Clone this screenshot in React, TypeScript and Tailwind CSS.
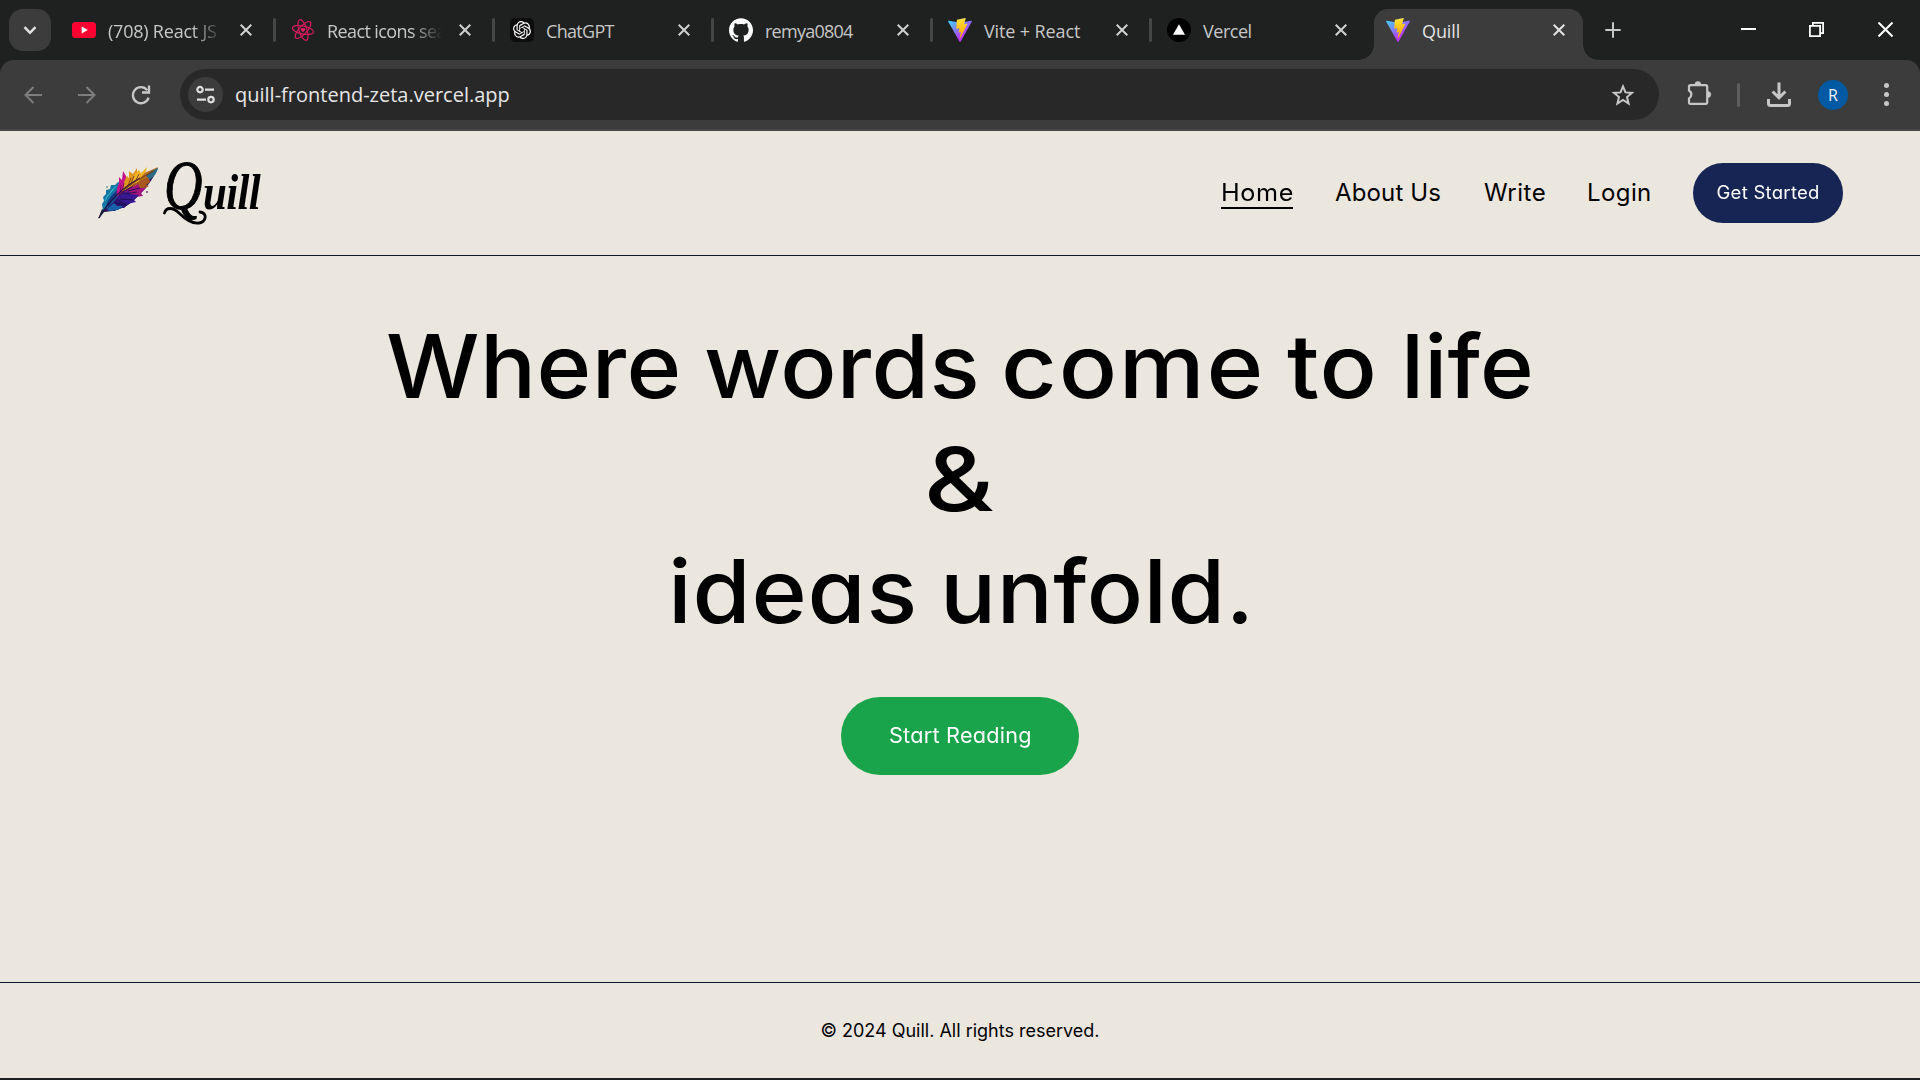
import React from "react";
import type { ReactNode } from "react";
import { SiGithub, SiOpenai } from "react-icons/si";

function ViteIcon({ id }: { id: string }) {
  return (
    <svg viewBox="0 0 256 257" className="h-6 w-6">
      <defs>
        <linearGradient id={`${id}-a`} x1="-.828%" x2="57.636%" y1="7.652%" y2="78.411%">
          <stop offset="0%" stopColor="#41D1FF" />
          <stop offset="100%" stopColor="#BD34FE" />
        </linearGradient>
        <linearGradient id={`${id}-b`} x1="43.376%" x2="50.316%" y1="2.242%" y2="89.03%">
          <stop offset="0%" stopColor="#FFEA83" />
          <stop offset="8.333%" stopColor="#FFDD35" />
          <stop offset="100%" stopColor="#FFA800" />
        </linearGradient>
      </defs>
      <path
        fill={`url(#${id}-a)`}
        d="M255.153 37.938L134.897 252.976c-2.483 4.44-8.862 4.466-11.382.048L.875 37.958c-2.746-4.814 1.371-10.646 6.827-9.67l120.385 21.517a6.537 6.537 0 0 0 2.322-.004l117.867-21.483c5.438-.991 9.574 4.796 6.877 9.62Z"
      />
      <path
        fill={`url(#${id}-b)`}
        d="M185.432.063L96.44 17.501a3.268 3.268 0 0 0-2.634 3.014l-5.474 92.456a3.268 3.268 0 0 0 3.997 3.378l24.777-5.718c2.318-.535 4.413 1.507 3.936 3.838l-7.361 36.047c-.495 2.426 1.782 4.5 4.151 3.78l15.304-4.649c2.372-.72 4.652 1.36 4.15 3.788l-11.698 56.621c-.732 3.542 3.979 5.473 5.943 2.437l1.313-2.028 72.516-144.72c1.215-2.423-.88-5.186-3.54-4.672l-25.505 4.922c-2.396.462-4.435-1.77-3.759-4.114l16.646-57.705c.677-2.35-1.37-4.583-3.769-4.113Z"
      />
    </svg>
  );
}

function YouTubeIcon() {
  return (
    <svg viewBox="0 0 24 24" className="h-6 w-6">
      <rect x="0" y="4" width="24" height="16" rx="3.6" fill="#ff0033" />
      <path d="M9.7 8.6 15.8 12l-6.1 3.4z" fill="#fff" />
    </svg>
  );
}

function AtomIcon() {
  return (
    <svg viewBox="0 0 24 24" className="h-6 w-6" fill="none" stroke="#d81b60" strokeWidth="1.15">
      <ellipse cx="12" cy="12" rx="10.8" ry="4" transform="rotate(12 12 12)" />
      <ellipse cx="12" cy="12" rx="10.8" ry="4" transform="rotate(72 12 12)" />
      <ellipse cx="12" cy="12" rx="10.8" ry="4" transform="rotate(132 12 12)" />
      <path
        d="M12 14.3 9.8 12.1a1.3 1.3 0 0 1 2.2-1.5 1.3 1.3 0 0 1 2.2 1.5z"
        fill="#e91e63"
        stroke="none"
      />
    </svg>
  );
}

function OpenAiIcon() {
  return (
    <span className="flex h-6 w-6 items-center justify-center rounded-[5px] bg-[#0d0d0d] text-white">
      <SiOpenai size={18} />
    </span>
  );
}

function VercelIcon() {
  return (
    <svg viewBox="0 0 24 24" className="h-6 w-6">
      <circle cx="12" cy="12" r="12" fill="#000" />
      <path d="M12 6.2 18 16.8H6z" fill="#fff" />
    </svg>
  );
}

function CloseIcon({ className }: { className: string }) {
  return (
    <svg viewBox="0 0 12 12" className={className} fill="none" stroke="currentColor" strokeWidth="2">
      <path d="M.7.7l10.6 10.6M11.3.7.7 11.3" />
    </svg>
  );
}

type Tab = { icon: ReactNode; title: string; track: string; fade?: boolean; divider: boolean };

const tabs: Tab[] = [
  { icon: <YouTubeIcon />, title: "(708) React JS", track: "tracking-[-0.22px]", fade: true, divider: true },
  { icon: <AtomIcon />, title: "React icons sea", track: "tracking-[-0.6px]", fade: true, divider: true },
  { icon: <OpenAiIcon />, title: "ChatGPT", track: "tracking-[-0.7px]", divider: true },
  { icon: <SiGithub size={24} color="#fff" />, title: "remya0804", track: "tracking-[-0.75px]", divider: true },
  { icon: <ViteIcon id="vite-tab" />, title: "Vite + React", track: "tracking-[-0.12px]", divider: true },
  { icon: <VercelIcon />, title: "Vercel", track: "tracking-[-0.48px]", divider: false },
];

function BrowserTab({ tab }: { tab: Tab }) {
  return (
    <div className="flex w-[219px] shrink-0 items-center">
      <span className="w-6 shrink-0">{tab.icon}</span>
      <span
        className={`ml-3 w-[120px] text-lg leading-6 whitespace-nowrap text-[#c7c7c7] ${tab.track} ${
          tab.fade ? "[mask-image:linear-gradient(to_right,#000_84px,transparent_115px)]" : ""
        }`}
      >
        <span className="relative top-px">{tab.title}</span>
      </span>
      <CloseIcon className="ml-[12px] h-3 w-3 text-[#d0d0d0]" />
      {tab.divider && <span className="ml-[21px] h-6 w-[3px] rounded-full bg-[#454746]" />}
    </div>
  );
}

function TabStrip() {
  return (
    <div className="flex h-[60px] bg-[#1f2120]">
      <div className="flex w-[72px] shrink-0 pt-[9px] pl-[9px]">
        <button className="flex h-[42px] w-[42px] items-center justify-center rounded-[14px] bg-[#3c3c3c]">
          <svg viewBox="0 0 14 9" className="h-[9px] w-[14px]" fill="none" stroke="#e3e3e3" strokeWidth="2.5">
            <path d="M1.5 1.2 7 6.8l5.5-5.6" />
          </svg>
        </button>
      </div>
      {tabs.map((tab) => (
        <BrowserTab key={tab.title} tab={tab} />
      ))}
      <div className="relative mt-[9px] -ml-3 flex h-[51px] w-[209px] shrink-0 items-center rounded-t-[14px] bg-[#3c3c3c] pb-[9px] pl-3">
        <span className="absolute bottom-0 -left-[15px] h-[15px] w-[15px] bg-[radial-gradient(circle_at_0_0,transparent_14.5px,#3c3c3c_15px)]" />
        <span className="absolute -right-[15px] bottom-0 h-[15px] w-[15px] bg-[radial-gradient(circle_at_100%_0,transparent_14.5px,#3c3c3c_15px)]" />
        <ViteIcon id="quill-tab" />
        <span className="relative top-px ml-[12px] w-[110px] text-lg leading-6 tracking-[-0.1px] text-[#e3e3e3]">Quill</span>
        <CloseIcon className="ml-[21px] h-3 w-3 text-[#e3e3e3]" />
      </div>
      <div className="flex grow items-center pr-[27px] pl-[22px] text-white">
        <svg viewBox="0 0 16 16" className="h-4 w-4" fill="none" stroke="#c7c7c7" strokeWidth="2">
          <path d="M8 .3v15.4M.3 8h15.4" />
        </svg>
        <div className="grow" />
        <svg viewBox="0 0 15 16" className="h-4 w-[15px]" fill="#fff">
          <path d="M0 6h15v2H0z" />
        </svg>
        <svg viewBox="0 0 15 15" className="mb-px ml-[53px] h-[15px] w-[15px]" fill="none" stroke="#fff" strokeWidth="1.8">
          <path d="M.9 3.9h10.2v10.2H.9zM3.9 3.5V.9h10.2v10.2h-2.8" />
        </svg>
        <svg viewBox="0 0 15 15" className="mb-px ml-[54px] h-[15px] w-[15px]" fill="none" stroke="#fff" strokeWidth="2">
          <path d="M.5.5l14 14M14.5.5l-14 14" />
        </svg>
      </div>
    </div>
  );
}

function Toolbar() {
  return (
    <div className="bg-[#1f2120]">
      <div className="flex h-[71px] items-start rounded-t-[14px] border-b-2 border-[#474747] bg-[#3c3c3c] pt-[9px]">
        <div className="flex h-[51px] w-[180px] shrink-0 items-center pl-[24px]">
          <svg viewBox="0 0 18 18" className="h-[18px] w-[18px]" fill="none" stroke="#7d7d7d" strokeWidth="2">
            <path d="M18 9H2M9.5 1 1.5 9l8 8" />
          </svg>
          <svg viewBox="0 0 18 18" className="ml-[36px] h-[18px] w-[18px]" fill="none" stroke="#7d7d7d" strokeWidth="2">
            <path d="M0 9h16M8.5 1l8 8-8 8" />
          </svg>
          <svg viewBox="0 0 20 20" className="ml-[35px] h-5 w-5" fill="none" stroke="#c7c7c7" strokeWidth="2.3">
            <path d="M17.6 12.6A8 8 0 1 1 16.2 5.2" />
            <path d="M18 .5v7h-7" />
          </svg>
        </div>
        <div className="flex h-[51px] w-[1479px] shrink-0 items-center rounded-full bg-[#282828] pr-6 pl-2">
          <span className="flex h-[35px] w-[35px] items-center justify-center rounded-full bg-[#3c3c3c]">
            <svg viewBox="0 0 19 19" className="h-[19px] w-[19px]" fill="none" stroke="#dedede" strokeWidth="2.2">
              <circle cx="4" cy="4.6" r="2.7" />
              <path d="M9 4.6h9M1 14.6h9" />
              <circle cx="15" cy="14.6" r="2.7" />
            </svg>
          </span>
          <span className="ml-3 grow text-xl leading-6 text-[#e6e6e6]">quill-frontend-zeta.vercel.app</span>
          <svg viewBox="0 0 24 24" className="h-6 w-6" fill="none" stroke="#c7c7c7" strokeWidth="2">
            <path d="m12 3.4 2.500 6 6.500.5-5 4.200 1.600 6.400L12 17l-5.600 3.500L8 14.100 3 9.900l6.500-.5z" />
          </svg>
        </div>
        <div className="flex h-[51px] grow items-center">
          <svg viewBox="0 0 26 26" className="mb-[3px] ml-[28px] h-[26px] w-[26px]">
            <path
              d="M3.500 5.200H18.700a1.500 1.500 0 0 1 1.500 1.500V22.300a1.500 1.500 0 0 1-1.500 1.500H3a1 1 0 0 1-1-1v-4.300a4.600 4.600 0 0 0 0-8V6.700a1.500 1.500 0 0 1 1.500-1.500z"
              fill="none"
              stroke="#c7c7c7"
              strokeWidth="2.2"
            />
            <path d="M7.900 4.500a3 3 0 0 1 6 0zM20.800 11.500a3 3 0 0 1 0 6z" fill="#c7c7c7" stroke="#c7c7c7" strokeWidth=".6" />
          </svg>
          <span className="ml-[24px] h-6 w-[3px] rounded-full bg-[#5e5e5e]" />
          <svg viewBox="0 0 24 25" className="ml-[27px] h-[25px] w-6" fill="none" stroke="#c7c7c7" strokeWidth="3">
            <path d="M12 .5v15M5.600 9.500 12 15.800l6.400-6.300" />
            <path d="M1.500 17v4.500a2 2 0 0 0 2 2h17a2 2 0 0 0 2-2V17" />
          </svg>
          <span className="ml-[27px] flex h-[30px] w-[30px] items-center justify-center rounded-full bg-[#0059a3] text-base text-[#eef4fa]">
            R
          </span>
          <span className="ml-[36px] flex flex-col gap-[4px]">
            <span className="h-[5px] w-[5px] rounded-full bg-[#c7c7c7]" />
            <span className="h-[5px] w-[5px] rounded-full bg-[#c7c7c7]" />
            <span className="h-[5px] w-[5px] rounded-full bg-[#c7c7c7]" />
          </span>
        </div>
      </div>
    </div>
  );
}

function Feather() {
  return (
    <svg viewBox="0 0 62 54" className="h-[54px] w-[62px]">
      <path d="M1 52C8 38 22 22 60 2 54 16 44 27 34 36 24 44 12 46 4 46z" fill="#33145c" />
      <path d="M5 45 4 38l2-3-1-4 3-3 0-4 4-1 1-4 4 0 3-3 3 1-2 12-8 10z" fill="#1478a4" />
      <path d="M8 40c2-7 7-13 13-17l1 4-11 13z" fill="#123a86" />
      <path d="M19 31c-1-6 0-10 2-14l0-6 3 3 1-9 3 5 1 4-2 8z" fill="#c3138c" />
      <path d="M25 25c0-7 2-12 4-15l2 2 0-7 4 3 4-6 0 6-5 12z" fill="#e0971c" />
      <path d="M34 19c0-7 3-12 7-15l2 3 6-6-2 8-6 7z" fill="#f0b428" />
      <path d="M41 15c2-5 6-9 10-10l9-4-4 7-8 6z" fill="#b9731e" />
      <path d="M48 10c3-4 7-6 12-8-1 5-4 9-9 12z" fill="#2c6c86" />
      <path d="M34 19l16-8 2 5-4 3 3 1-7 4-8 0z" fill="#a9561c" />
      <path d="M26 26l14-8 2 4 6 0-5 5 2 3-8 1z" fill="#a3147e" />
      <path d="M18 32l12-7 3 3 8 1-5 5 2 2-9 2z" fill="#3a1894" />
      <path d="M10 41l10-9 4 4 8 1-6 5-6 0-3 3-7 0z" fill="#2a1474" />
      <path d="M9 43l7-6 3 3 6 0-5 4-9 1z" fill="#1663a8" />
      <path d="M7 35l3-6M10 30l5-7M13 26l5-6" stroke="#3cc0d6" strokeWidth=".9" fill="none" />
      <path d="M29 22l4-10M32 20l4-10M37 16l4-8" stroke="#7a3c10" strokeWidth=".9" fill="none" />
      <path d="M22 29l1-10M24 27l2-10" stroke="#6e0f66" strokeWidth=".9" fill="none" />
      <path d="M27 28l12-2M22 33l13 1M30 25l12-3M17 37l11 2" stroke="#160f45" strokeWidth=".9" fill="none" />
      <path d="M1 52C10 36 24 22 42 12" stroke="#1a1448" strokeWidth="1.3" fill="none" />
      <path d="M24 25C34 17 44 11 56 5" stroke="#7a3f16" strokeWidth="1.2" fill="none" />
      <path d="M0 53l4-10 3 2z" fill="#181b3c" />
      <circle cx="49" cy="26" r=".9" fill="#5a2a60" />
      <circle cx="9" cy="21" r=".8" fill="#14607e" />
      <circle cx="47" cy="21" r=".7" fill="#5a2a60" />
    </svg>
  );
}

function Logo() {
  return (
    <div className="flex items-center">
      <Feather />
      <div className="relative -top-[7px] ml-[4px] flex h-[70px] w-[100px] items-baseline font-['Liberation_Serif',serif] leading-[70px] text-black italic">
        <span className="inline-block w-[39px] origin-left scale-x-[0.76] text-[70px] [-webkit-text-stroke:1px_#000]">Q</span>
        <span className="inline-block origin-left scale-x-[0.86] text-[50px] font-bold tracking-[-0.8px]">uill</span>
        <svg viewBox="0 0 48 22" className="absolute top-[54px] left-[-1px] h-[22px] w-[48px]" fill="none" stroke="#000" strokeLinecap="round">
          <path d="M1.500 8C3 2 10 2 16 8s13 11 20 10 9-10 1-11" strokeWidth="2.800" />
        </svg>
      </div>
    </div>
  );
}

function SiteHeader() {
  return (
    <header className="flex h-[125px] items-center justify-between border-b border-[#0f172a] pr-[77px] pl-[98px]">
      <Logo />
      <nav className="flex items-center text-2xl leading-8 text-black">
        <a className="w-[72px] bg-[linear-gradient(#000,#000)] bg-[length:100%_2px] bg-[position:0_100%] bg-no-repeat whitespace-nowrap">
          <span className="inline-block origin-left scale-x-[1.05] tracking-[0.6px]">Home</span>
        </a>
        <a className="ml-[42px] w-[106px] tracking-[0.15px] whitespace-nowrap">About Us</a>
        <a className="ml-[43px] w-[62px] tracking-[0.5px]">Write</a>
        <a className="ml-[41px] w-[64px] tracking-[0.4px]">Login</a>
        <button className="ml-[42px] h-[60px] w-[150px] rounded-full bg-[#172554] text-lg text-white">
          <span className="inline-block scale-x-[1.03] tracking-[0.25px]">Get Started</span>
        </button>
      </nav>
    </header>
  );
}

function Hero() {
  return (
    <main className="flex grow flex-col pt-[54px]">
      <h1 className="text-[88px] leading-[112.5px] font-medium whitespace-nowrap text-black">
        <span className="flex pl-[386px]">
          <span className="w-[318px] origin-left scale-x-[1.06] tracking-[0.4px]">Where</span>
          <span className="w-[297px] origin-left scale-x-[1.06] tracking-[0.35px]">words</span>
          <span className="w-[286px] origin-left scale-x-[1.1] tracking-[1.6px]">come</span>
          <span className="w-[114px] origin-left scale-x-[1.08] tracking-[1px]">to</span>
          <span className="origin-left scale-x-[1.04] tracking-[0.2px]">life</span>
        </span>
        <span className="flex pl-[924px]">
          <span className="origin-left scale-x-[1.22]">&amp;</span>
        </span>
        <span className="flex pl-[668px]">
          <span className="w-[272px] origin-left scale-x-[1.07] tracking-[0.7px]">ideas</span>
          <span className="origin-left scale-x-[1.06] tracking-[0.5px]">unfold.</span>
        </span>
      </h1>
      <button className="mt-[49px] h-[78px] w-[238px] self-center rounded-full bg-[#19a44b] text-[21px] text-white">
        <span className="inline-block scale-x-[1.03] tracking-[0.25px]">Start Reading</span>
      </button>
    </main>
  );
}

export default function App() {
  return (
    <div className="flex h-[1080px] w-[1920px] flex-col overflow-hidden bg-[#ebe6de] font-['Open_Sans',sans-serif]">
      <TabStrip />
      <Toolbar />
      <div className="flex grow flex-col font-['Inter',sans-serif] [font-feature-settings:'cv11']">
        <SiteHeader />
        <Hero />
        <footer className="flex h-[96px] items-center justify-center border-t border-[#0f172a] text-lg text-black">
          © 2024 Quill. All rights reserved.
        </footer>
      </div>
      <div className="h-[2px] bg-[#1f2120]" />
    </div>
  );
}
